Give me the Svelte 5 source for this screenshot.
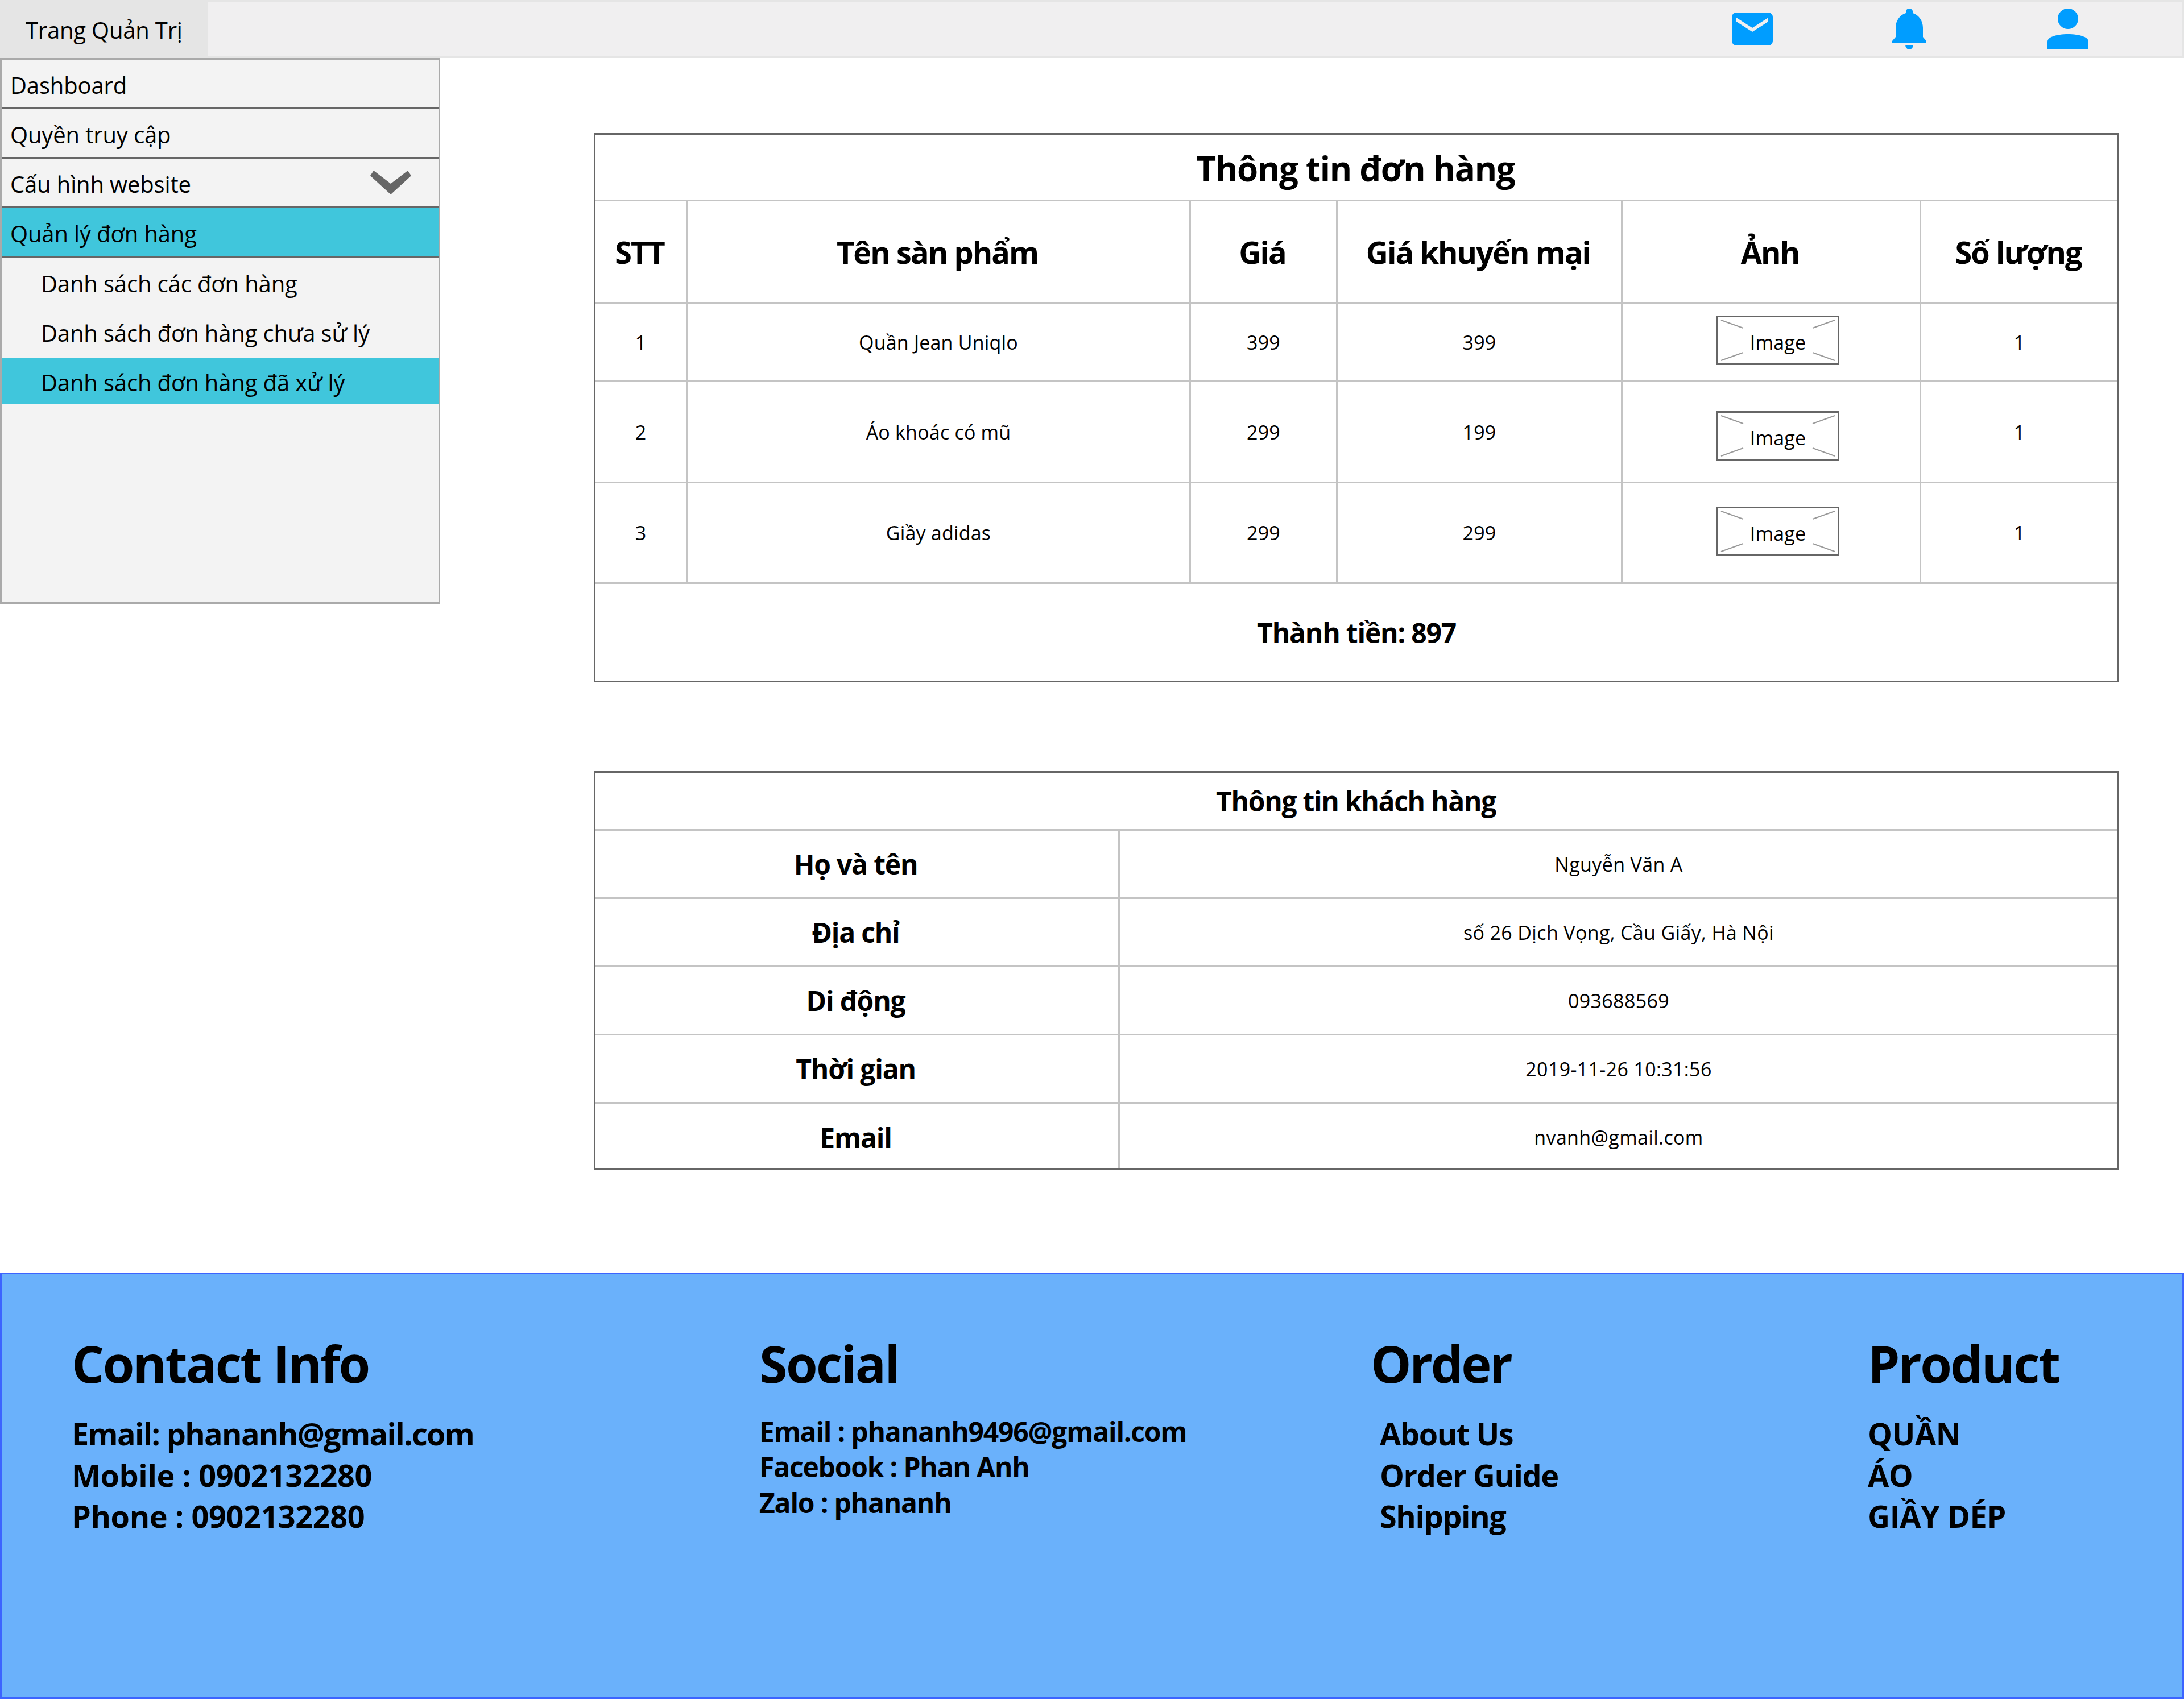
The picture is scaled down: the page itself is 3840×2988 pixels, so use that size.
<script>
  const products = [
    { cls: 'r1', n: 1, name: 'Quần Jean Uniqlo', price: 399, sale: 399, qty: 1 },
    { cls: 'r2', n: 2, name: 'Áo khoác có mũ', price: 299, sale: 199, qty: 1 },
    { cls: 'r3', n: 3, name: 'Giầy adidas', price: 299, sale: 299, qty: 1 }
  ];
  const customer = [
    ['Họ và tên', 'Nguyễn Văn A'],
    ['Địa chỉ', 'số 26 Dịch Vọng, Cầu Giấy, Hà Nội'],
    ['Di động', '093688569'],
    ['Thời gian', '2019-11-26 10:31:56'],
    ['Email', 'nvanh@gmail.com']
  ];
  const menu = [
    { label: 'Dashboard' },
    { label: 'Quyền truy cập' },
    { label: 'Cấu hình website', chevron: true },
    { label: 'Quản lý đơn hàng', active: true }
  ];
  const sub = [
    { label: 'Danh sách các đơn hàng' },
    { label: 'Danh sách đơn hàng chưa sử lý' },
    { label: 'Danh sách đơn hàng đã xử lý', active: true }
  ];
</script>

<div class="page">
  <header class="topbar">
    <div class="brand">Trang Quản Trị</div>
    <div class="icons">
      <svg class="mail" width="72" height="58" viewBox="0 0 72 58">
        <rect width="72" height="58" rx="8" fill="#009dff" />
        <polygon points="8,9 36,27 64,9 64,16 36,34 8,16" fill="#f0eff0" />
      </svg>
      <svg class="bell" width="60" height="72" viewBox="0 0 60 72">
        <path fill="#009dff" d="M24 8V5A6 5 0 0 1 36 5V8C47 11 54 22 54 34V50L60 57V61H0V57L6 50V34C6 22 13 11 24 8Z" />
        <path fill="#009dff" d="M23 64H37A7 8 0 0 1 23 64Z" />
      </svg>
      <svg class="user" width="72" height="72" viewBox="0 0 72 72">
        <circle cx="36" cy="18" r="18" fill="#009dff" />
        <path fill="#009dff" d="M0 72V58C0 50 16 45 36 45C56 45 72 50 72 58V72Z" />
      </svg>
    </div>
  </header>

  <div class="body">
    <nav class="sidebar">
      {#each menu as m}
        <div class="item" class:active={m.active}>
          <span>{m.label}</span>
          {#if m.chevron}
            <svg width="72" height="42" viewBox="0 0 72 42"><polygon points="0,9 6,0 36,23 66,0 72,9 36,42" fill="#666" /></svg>
          {/if}
        </div>
      {/each}
      {#each sub as s}
        <div class="subitem" class:active={s.active}>{s.label}</div>
      {/each}
    </nav>

    <main class="content">
      <table class="orders">
        <colgroup>
          <col class="c1" /><col class="c2" /><col class="c3" /><col class="c4" /><col class="c5" /><col class="c6" />
        </colgroup>
        <tbody>
          <tr class="title"><td colspan="6">Thông tin đơn hàng</td></tr>
          <tr class="head">
            <th>STT</th><th>Tên sàn phẩm</th><th>Giá</th><th>Giá khuyến mại</th><th>Ảnh</th><th>Số lượng</th>
          </tr>
          {#each products as p}
            <tr class="row {p.cls}">
              <td>{p.n}</td>
              <td>{p.name}</td>
              <td>{p.price}</td>
              <td>{p.sale}</td>
              <td class="imgcell">
                <div class="img">
                  <svg width="210" height="81" viewBox="0 0 210 81">
                    <g stroke="#999" stroke-width="2">
                      <line x1="5" y1="5" x2="44" y2="19" />
                      <line x1="205" y1="5" x2="166" y2="19" />
                      <line x1="5" y1="76" x2="44" y2="62" />
                      <line x1="205" y1="76" x2="166" y2="62" />
                    </g>
                  </svg>
                  <span>Image</span>
                </div>
              </td>
              <td>{p.qty}</td>
            </tr>
          {/each}
          <tr class="total"><td colspan="6">Thành tiền: 897</td></tr>
        </tbody>
      </table>

      <table class="customer">
        <colgroup><col class="k" /><col /></colgroup>
        <tbody>
          <tr class="title"><td colspan="2">Thông tin khách hàng</td></tr>
          {#each customer as [k, v]}
            <tr class="row"><th>{k}</th><td>{v}</td></tr>
          {/each}
        </tbody>
      </table>
    </main>
  </div>

  <footer class="footer">
    <section class="col contact">
      <h2>Contact Info</h2>
      <p>Email: phananh@gmail.com</p>
      <p class="num">Mobile : 0902132280</p>
      <p class="num">Phone : 0902132280</p>
    </section>
    <section class="col social">
      <h2>Social</h2>
      <p>Email : phananh9496@gmail.com</p>
      <p>Facebook : Phan Anh</p>
      <p>Zalo : phananh</p>
    </section>
    <section class="col order">
      <h2>Order</h2>
      <p>About Us</p>
      <p>Order Guide</p>
      <p>Shipping</p>
    </section>
    <section class="col product">
      <h2>Product</h2>
      <p>QUẦN</p>
      <p>ÁO</p>
      <p>GIẦY DÉP</p>
    </section>
  </footer>
</div>

<style>
  :global(body) { margin: 0; background: #fff; }
  .page {
    width: 3840px;
    height: 2988px;
    font-family: "Open Sans", "Noto Sans", sans-serif;
    color: #000;
    overflow: hidden;
  }
  .topbar {
    height: 102px;
    box-sizing: border-box;
    display: flex;
    background: #f0eff0;
    border: 3px solid #e5e5e5;
    border-left: 0;
    align-items: stretch;
  }
  .brand {
    width: 366px;
    margin: -3px 0;
    padding: 3px 0 0 45px;
    box-sizing: border-box;
    background: #e5e5e5;
    display: flex;
    align-items: center;
    font-size: 40px;
    letter-spacing: -0.2px;
  }
  .icons { position: relative; flex: 1; }
  .icons svg { position: absolute; }
  .mail { left: 2679px; top: 19px; }
  .bell { left: 2961px; top: 12px; }
  .user { left: 3234px; top: 12px; }

  .body { display: flex; align-items: flex-start; }
  .sidebar {
    width: 774px;
    height: 960px;
    box-sizing: border-box;
    background: #f3f3f3;
    border: 3px solid #aaa;
    flex: none;
    font-size: 40px;
    letter-spacing: -0.15px;
  }
  .item {
    height: 87px;
    box-sizing: border-box;
    border-bottom: 3px solid #666;
    padding: 4px 48px 0 15px;
    display: flex;
    align-items: center;
    justify-content: space-between;
  }
  .item svg { margin-top: -4px; }
  .item.active { background: #40c6dc; }
  .subitem {
    height: 87px;
    box-sizing: border-box;
    padding: 4px 0 0 69px;
    display: flex;
    align-items: center;
  }
  .subitem.active { background: #40c6dc; height: 81px; margin-top: 3px; }

  .content { flex: 1; padding: 132px 114px 0 270px; min-width: 0; }
  table {
    border-collapse: separate;
    border-spacing: 0;
    table-layout: fixed;
    width: 2682px;
    border: 3px solid #666;
    box-sizing: border-box;
    text-align: center;
  }
  td, th {
    padding: 0;
    border-right: 3px solid #c4c4c4;
    border-bottom: 3px solid #c4c4c4;
    box-sizing: border-box;
    vertical-align: middle;
  }
  td:last-child, th:last-child { border-right: 0; }
  tr:last-child td, tr:last-child th { border-bottom: 0; }
  .title td { font-weight: 700; }

  .orders { height: 966px; }
  .c1 { width: 162px; }
  .c2 { width: 885px; }
  .c3 { width: 258px; }
  .c4 { width: 501px; }
  .c5 { width: 525px; }
  .orders .title { height: 117px; }
  .orders .title td { font-size: 60px; letter-spacing: -1.3px; padding-top: 4px; padding-right: 3px; }
  .head { height: 180px; }
  .head th { font-size: 54px; font-weight: 700; letter-spacing: -1.9px; padding-right: 4px; }
  .orders .row td { font-size: 34px; letter-spacing: 0.2px; }
  .r1 { height: 138px; }
  .r2 { height: 178px; }
  .r3 { height: 177px; }
  .total { height: 170px; }
  .total td { font-size: 48px; font-weight: 700; letter-spacing: -1.2px; }
  .orders .row .imgcell { vertical-align: top; text-align: left; padding-left: 165px; }
  .img {
    position: relative;
    width: 216px;
    height: 87px;
    box-sizing: border-box;
    border: 3px solid #666;
    background: #fff;
    display: flex;
    align-items: center;
    justify-content: center;
  }
  .img svg { position: absolute; left: 0; top: 0; }
  .img span { position: relative; top: 3px; }
  .r1 .img { margin-top: 21px; }
  .r2 .img { margin-top: 51px; }
  .r3 .img { margin-top: 41px; }

  .customer { height: 702px; margin-top: 156px; }
  .k { width: 922px; }
  .customer .title { height: 102px; }
  .customer .title td { font-size: 48px; letter-spacing: -1.3px; padding-right: 2px; }
  .customer .row { height: 120px; }
  .customer .row:last-child { height: 114px; }
  .customer .row:last-child th, .customer .row:last-child td { padding-top: 4px; }
  .customer th { font-size: 48px; font-weight: 700; letter-spacing: -1.2px; padding-right: 4px; }
  .customer .row td { font-size: 34px; letter-spacing: 0.35px; }

  .footer {
    position: relative;
    height: 750px;
    margin-top: 180px;
    box-sizing: border-box;
    background: #6ab1fb;
    border: 3px solid #3c64ff;
    font-weight: 700;
  }
  .col { position: absolute; top: 101px; }
  .contact { left: 123px; }
  .social { left: 1332px; }
  .order { left: 2407px; }
  .product { left: 3281px; }
  h2 { margin: 0 0 33px; font-size: 90px; line-height: 110px; letter-spacing: -2.6px; }
  p { margin: 0; font-size: 54px; line-height: 72.5px; letter-spacing: -1.65px; }
  p.num { letter-spacing: -0.4px; }
  .social p { font-size: 48px; line-height: 62.4px; letter-spacing: -1.2px; }
  .social h2 { margin-bottom: 35px; }
  .order h2 { letter-spacing: -3.4px; }
  .order p { padding-left: 16px; letter-spacing: -1.4px; }
  .product p { letter-spacing: -0.4px; }
</style>
